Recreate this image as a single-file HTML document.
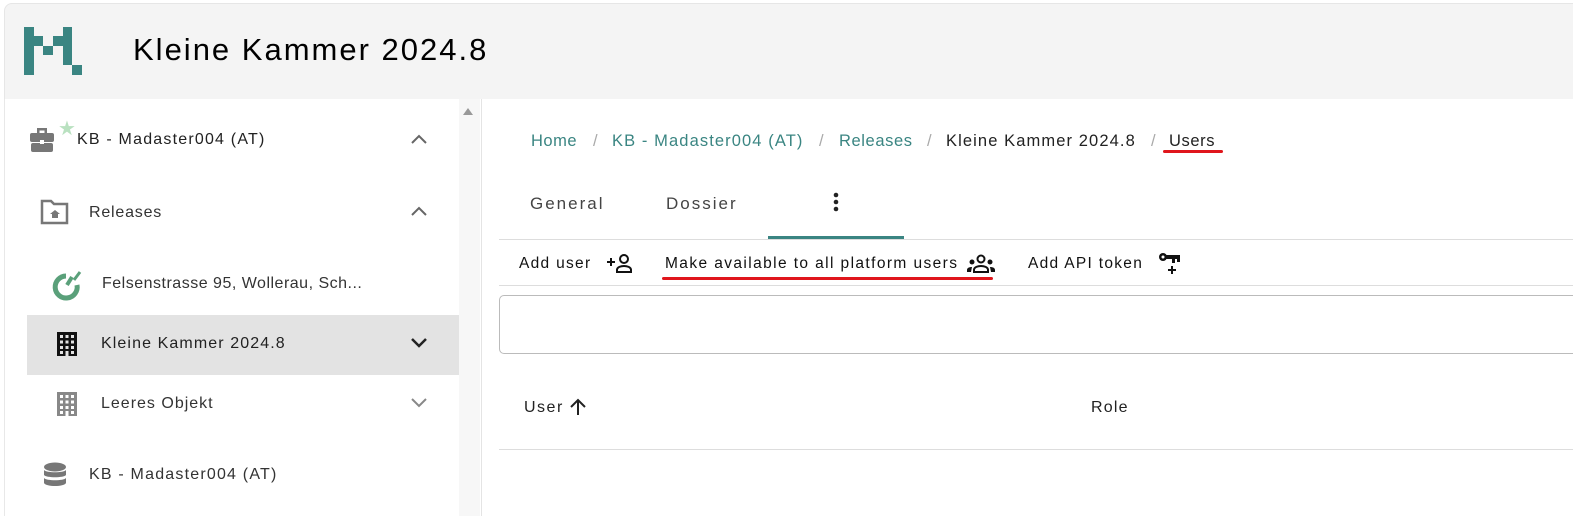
<!DOCTYPE html>
<html><head><meta charset="utf-8"><style>
*{box-sizing:border-box;margin:0;padding:0}
body{width:1573px;height:516px;overflow:hidden;background:#fff;font-family:"Liberation Sans",sans-serif;position:relative;color:#222}
.hdr{position:absolute;left:4px;top:3px;width:1580px;height:96px;background:#f4f4f4;border-top-left-radius:8px;border:1px solid #e6e6e6;border-bottom:none}
.abs{position:absolute}
.t{position:absolute;white-space:nowrap}
.bc{position:absolute;top:132px;font-size:16.5px;letter-spacing:1.1px;white-space:nowrap;color:#3a8582}
.sl{position:absolute;top:132px;font-size:16.5px;color:#aaa}
.tb{position:absolute;top:255px;font-size:15.5px;color:#111;letter-spacing:1.3px;white-space:nowrap}
</style></head><body>
<div class="hdr"></div>
<svg class="abs" style="left:0;top:0" width="90" height="90" fill="#3a8582">
<rect x="24" y="27" width="10" height="48"/><rect x="34" y="36" width="9" height="10"/><rect x="43" y="46" width="10" height="9"/><rect x="53" y="36" width="10" height="10"/><rect x="63" y="27" width="9" height="38"/><rect x="72" y="65" width="10" height="10"/>
</svg>
<div class="t" style="left:133px;top:32px;font-size:31px;letter-spacing:2px;color:#000">Kleine Kammer 2024.8</div>

<div class="abs" style="left:4px;top:99px;width:1px;height:417px;background:#e8e8e8"></div>
<div class="abs" style="left:459px;top:99px;width:21px;height:417px;background:#f7f7f7"></div>
<div class="abs" style="left:481px;top:99px;width:1px;height:417px;background:#e4e4e4"></div>
<svg class="abs" style="left:462px;top:106px" width="12" height="10"><path d="M1 9 L6 2 L11 9Z" fill="#999"/></svg>

<svg class="abs" style="left:28px;top:126px" width="28" height="28" fill="#777"><path d="M9 2h10v5h-2.5V4.5h-5V7H9z"/><rect x="2" y="7" width="24" height="9" rx="2"/><rect x="3" y="17" width="22" height="9" rx="2"/><rect x="12" y="14" width="4" height="4" fill="#fff"/></svg>
<div class="t" style="left:58px;top:116px;color:#b9e1c0;font-size:20px">★</div>
<div class="t" style="left:77px;top:131px;font-size:16px;letter-spacing:1.2px">KB - Madaster004 (AT)</div>
<svg class="abs" style="left:410px;top:133px" width="18" height="12"><path d="M2 10L9 3l7 7" stroke="#666" stroke-width="2" fill="none"/></svg>

<svg class="abs" style="left:40px;top:199px" width="30" height="26"><path d="M2 2h9l3 3h13v19H2z" fill="none" stroke="#777" stroke-width="2.5"/><path d="M15 11l5 4h-2v4h-6v-4h-2z" fill="#777"/></svg>
<div class="t" style="left:89px;top:204px;font-size:16px;letter-spacing:.8px;color:#333">Releases</div>
<svg class="abs" style="left:410px;top:205px" width="18" height="12"><path d="M2 10L9 3l7 7" stroke="#666" stroke-width="2" fill="none"/></svg>

<svg class="abs" style="left:50px;top:268px" width="34" height="34"><path d="M16 8 A11 11 0 1 0 27 17" stroke="#5aa07a" stroke-width="5" fill="none"/><path d="M17 17 L22 9" stroke="#5aa07a" stroke-width="4"/><path d="M24 12 L30 4" stroke="#5aa07a" stroke-width="3"/></svg>
<div class="t" style="left:102px;top:275px;font-size:16px;letter-spacing:.5px;color:#333">Felsenstrasse 95, Wollerau, Sch...</div>

<div class="abs" style="left:27px;top:315px;width:432px;height:60px;background:#e3e3e3"></div>
<svg class="abs" style="left:57px;top:332px" width="20" height="24"><rect width="20" height="24" fill="#111"/><g fill="#e3e3e3"><rect x="3" y="3" width="3" height="3"/><rect x="8.5" y="3" width="3" height="3"/><rect x="14" y="3" width="3" height="3"/><rect x="3" y="8.5" width="3" height="3"/><rect x="8.5" y="8.5" width="3" height="3"/><rect x="14" y="8.5" width="3" height="3"/><rect x="3" y="14" width="3" height="3"/><rect x="8.5" y="14" width="3" height="3"/><rect x="14" y="14" width="3" height="3"/><rect x="3" y="19" width="3" height="3"/><rect x="8.5" y="19" width="3" height="5"/><rect x="14" y="19" width="3" height="3"/></g></svg>
<div class="t" style="left:101px;top:335px;font-size:16px;letter-spacing:1.1px;color:#222">Kleine Kammer 2024.8</div>
<svg class="abs" style="left:410px;top:337px" width="18" height="12"><path d="M2 2l7 7 7-7" stroke="#222" stroke-width="2.5" fill="none"/></svg>

<svg class="abs" style="left:57px;top:392px" width="20" height="24"><rect width="20" height="24" fill="#888"/><g fill="#fff"><rect x="3" y="3" width="3" height="3"/><rect x="8.5" y="3" width="3" height="3"/><rect x="14" y="3" width="3" height="3"/><rect x="3" y="8.5" width="3" height="3"/><rect x="8.5" y="8.5" width="3" height="3"/><rect x="14" y="8.5" width="3" height="3"/><rect x="3" y="14" width="3" height="3"/><rect x="8.5" y="14" width="3" height="3"/><rect x="14" y="14" width="3" height="3"/><rect x="3" y="19" width="3" height="3"/><rect x="8.5" y="19" width="3" height="5"/><rect x="14" y="19" width="3" height="3"/></g></svg>
<div class="t" style="left:101px;top:395px;font-size:16px;letter-spacing:1px;color:#333">Leeres Objekt</div>
<svg class="abs" style="left:410px;top:397px" width="18" height="12"><path d="M2 2l7 7 7-7" stroke="#888" stroke-width="2" fill="none"/></svg>

<svg class="abs" style="left:43px;top:462px" width="24" height="26" fill="#777"><ellipse cx="12" cy="5" rx="11" ry="4.5"/><path d="M1 8c2 3 20 3 22 0v5c-2 3-20 3-22 0z"/><path d="M1 16c2 3 20 3 22 0v5c-2 4-20 4-22 0z"/></svg>
<div class="t" style="left:89px;top:466px;font-size:16px;letter-spacing:1.2px;color:#333">KB - Madaster004 (AT)</div>

<div class="bc" style="left:531px;letter-spacing:.5px">Home</div>
<div class="sl" style="left:593px">/</div>
<div class="bc" style="left:612px">KB - Madaster004 (AT)</div>
<div class="sl" style="left:819px">/</div>
<div class="bc" style="left:839px;letter-spacing:.6px">Releases</div>
<div class="sl" style="left:927px">/</div>
<div class="bc" style="left:946px;color:#222">Kleine Kammer 2024.8</div>
<div class="sl" style="left:1151px">/</div>
<div class="bc" style="left:1169px;color:#222;letter-spacing:.6px">Users</div>
<div class="abs" style="left:1163px;top:150px;width:60px;height:3px;background:#e0161c;border-radius:2px"></div>

<div class="t" style="left:530px;top:194px;font-size:17px;color:#444;letter-spacing:2px">General</div>
<div class="t" style="left:666px;top:194px;font-size:17px;color:#444;letter-spacing:2px">Dossier</div>
<svg class="abs" style="left:831px;top:191px" width="10" height="24" fill="#222"><circle cx="5" cy="4" r="2.3"/><circle cx="5" cy="11" r="2.3"/><circle cx="5" cy="18" r="2.3"/></svg>
<div class="abs" style="left:768px;top:236px;width:136px;height:4px;background:#3a8582"></div>
<div class="abs" style="left:499px;top:239px;width:1074px;height:1px;background:#ddd"></div>

<div class="tb" style="left:519px">Add user</div>
<svg class="abs" style="left:605px;top:252px" width="28" height="22"><path d="M2 10h8M6 6v8" stroke="#111" stroke-width="2"/><circle cx="19" cy="7" r="4" fill="none" stroke="#111" stroke-width="2"/><path d="M12 20v-2c0-3 4-4 7-4s7 1 7 4v2z" fill="none" stroke="#111" stroke-width="2"/></svg>
<div class="tb" style="left:665px;letter-spacing:1.4px">Make available to all platform users</div>
<svg class="abs" style="left:967px;top:252px" width="28" height="22" fill="#111"><circle cx="14" cy="7" r="3.5" fill="none" stroke="#111" stroke-width="2"/><circle cx="5" cy="10" r="2.5"/><circle cx="23" cy="10" r="2.5"/><path d="M7 20v-2c0-3 4-4 7-4s7 1 7 4v2z" fill="none" stroke="#111" stroke-width="2"/><path d="M0 20v-2c0-2 2-3 5-3l-1 5zM28 20v-2c0-2-2-3-5-3l1 5z"/></svg>
<div class="abs" style="left:662px;top:277px;width:331px;height:3px;background:#e0161c;border-radius:2px"></div>
<div class="tb" style="left:1028px">Add API token</div>
<svg class="abs" style="left:1158px;top:251px" width="24" height="26" fill="#111"><circle cx="5" cy="6" r="4"/><rect x="8" y="4" width="14" height="4"/><rect x="14" y="8" width="3" height="4"/><rect x="19" y="8" width="3" height="3"/><path d="M10 19h8M14 15v8" stroke="#111" stroke-width="2"/><circle cx="5" cy="6" r="1.5" fill="#fff"/></svg>
<div class="abs" style="left:499px;top:285px;width:1074px;height:1px;background:#ddd"></div>

<div class="abs" style="left:499px;top:295px;width:1090px;height:59px;border:1px solid #bbb;border-radius:5px"></div>

<div class="t" style="left:524px;top:399px;font-size:16px;letter-spacing:1.5px;color:#222">User</div>
<svg class="abs" style="left:568px;top:397px" width="20" height="20"><path d="M10 18V3M3 10l7-7 7 7" stroke="#222" stroke-width="2" fill="none"/></svg>
<div class="t" style="left:1091px;top:399px;font-size:16px;letter-spacing:1.2px;color:#222">Role</div>
<div class="abs" style="left:499px;top:449px;width:1074px;height:1px;background:#ddd"></div>
</body></html>
